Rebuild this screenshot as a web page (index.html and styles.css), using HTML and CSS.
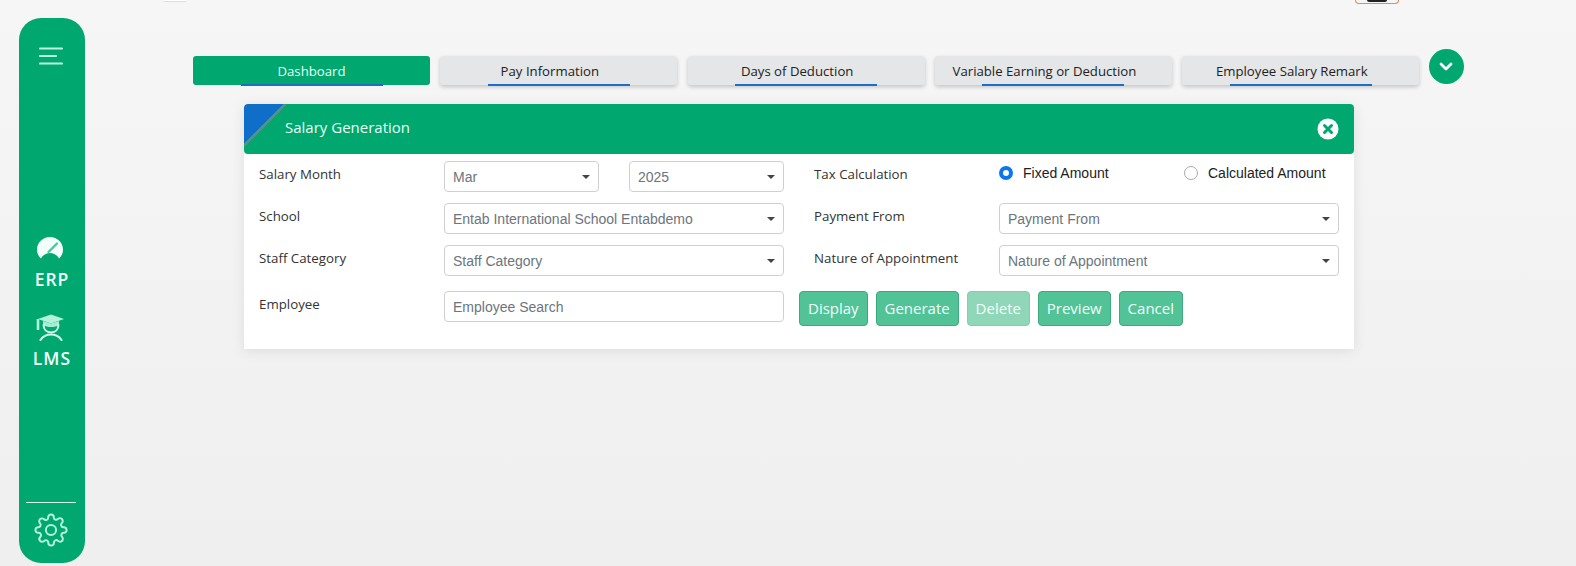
FILE: index.html
```html
<!DOCTYPE html>
<html lang="en">
  <head>
    <meta charset="UTF-8" />
    <meta name="viewport" content="width=device-width, initial-scale=1.0" />
    <title>Salary Generation</title>
    <link rel="stylesheet" href="styles.css">
  </head>
  <body>
    <aside class="sidebar">
      <svg class="menu-icon" width="24" height="19" viewBox="0 0 24 19">
        <path d="M1 1.500H23M1 9H17M1 16.500H23" fill="none" stroke="#bdf4e0" stroke-width="2.200" stroke-linecap="round" />
      </svg>

      <a class="side-link side-erp">
        <svg width="26" height="22" viewBox="0 0 26 22">
          <path d="M13 0C5.800 0 0 5.600 0 12.500c0 3 1 5.800 3 8l1 1c2-3.500 5.500-5.500 9-5.500s7 2 9 5.500l1-1c2-2.200 3-5 3-8C26 5.600 20.200 0 13 0z" fill="#f2fffa" />
          <path d="M11.500 15 20 6.500" stroke="#4cc79c" stroke-width="2.400" stroke-linecap="round" />
        </svg>
        <span>ERP</span>
      </a>

      <a class="side-link side-lms">
        <svg width="28" height="27" viewBox="0 0 28 27">
          <path d="M15 .5 28 5 15 9.500 2 5z" fill="#b5f2dc" />
          <path d="M7 7 15 9.500 23 7v4c-2 1.400-5 2-8 2s-6-.6-8-2z" fill="#a5eed4" />
          <path d="M2 5v11" stroke="#b5f2dc" stroke-width="2.600" />
          <path d="M7.500 10.500c0 5 3.200 8 7.500 8s7.500-3 7.500-8" fill="none" stroke="#d5f9ec" stroke-width="2" />
          <path d="M4.500 26c2.500-3.700 6-5.500 10.500-5.500S23 22.300 25.500 26" fill="none" stroke="#d5f9ec" stroke-width="2.200" stroke-linecap="round" />
        </svg>
        <span>LMS</span>
      </a>

      <div class="side-bottom">
        <svg width="34" height="34" viewBox="0 0 24 24" fill="none" stroke="#b5f2dc" stroke-width="1.400" stroke-linecap="round" stroke-linejoin="round">
          <circle cx="12" cy="12" r="3.600" />
          <path d="M19.400 15a1.650 1.650 0 0 0 .33 1.820l.06.06a2 2 0 1 1-2.830 2.830l-.06-.06a1.650 1.650 0 0 0-2.820 1.170V21a2 2 0 0 1-4 0v-.09A1.650 1.650 0 0 0 7.270 19.700l-.06.06a2 2 0 1 1-2.830-2.830l.06-.06A1.650 1.650 0 0 0 3.270 14H3a2 2 0 0 1 0-4h.09A1.650 1.650 0 0 0 4.300 7.270l-.06-.06a2 2 0 1 1 2.830-2.830l.06.06A1.650 1.650 0 0 0 10 3.270V3a2 2 0 0 1 4 0v.09a1.650 1.650 0 0 0 2.820 1.170l.06-.06a2 2 0 1 1 2.830 2.830l-.06.06A1.650 1.650 0 0 0 20.730 10H21a2 2 0 0 1 0 4h-.09a1.650 1.650 0 0 0-1.510 1z" />
        </svg>
      </div>
    </aside>

    <main class="content">
      <div class="topbar">
        <span class="top-check"></span>
        <span class="top-user"><span class="top-photo"></span></span>
      </div>

      <div class="tabs">
        <a class="tab tab-active">Dashboard</a>
        <a class="tab">Pay Information</a>
        <a class="tab">Days of Deduction</a>
        <a class="tab">Variable Earning or Deduction</a>
        <a class="tab">Employee Salary Remark</a>
        <button class="tab-more" type="button" aria-label="More">
          <svg width="14" height="9" viewBox="0 0 14 9">
            <path d="M2 2l5 5 5-5" fill="none" stroke="#fff" stroke-width="2.800" stroke-linecap="round" stroke-linejoin="round" />
          </svg>
        </button>
      </div>

      <section class="panel">
        <header class="panel-head">
          <h2>Salary Generation</h2>
          <svg width="22" height="22" viewBox="0 0 22 22">
            <circle cx="11" cy="11" r="10.500" fill="#fff" />
            <path d="M7.500 7.500l7 7M14.500 7.500l-7 7" stroke="#00a86f" stroke-width="3" stroke-linecap="round" />
          </svg>
        </header>

        <form class="form-grid">
          <label class="field-label">Salary Month</label>
          <div class="pair">
            <div class="select-box"><select><option>Mar</option></select></div>
            <div class="select-box"><select><option>2025</option></select></div>
          </div>
          <label class="field-label label-right">Tax Calculation</label>
          <div class="radios">
            <label class="radio-item"><input type="radio" name="tax" checked /> Fixed Amount</label>
            <label class="radio-item"><input type="radio" name="tax" /> Calculated Amount</label>
          </div>

          <label class="field-label">School</label>
          <div class="select-box"><select><option>Entab International School Entabdemo</option></select></div>
          <label class="field-label label-right">Payment From</label>
          <div class="select-box"><select><option>Payment From</option></select></div>

          <label class="field-label">Staff Category</label>
          <div class="select-box"><select><option>Staff Category</option></select></div>
          <label class="field-label label-right">Nature of Appointment</label>
          <div class="select-box"><select><option>Nature of Appointment</option></select></div>

          <label class="field-label label-employee">Employee</label>
          <input class="text-input" type="text" placeholder="Employee Search" />
          <div class="actions">
            <button class="btn" type="button">Display</button>
            <button class="btn" type="button">Generate</button>
            <button class="btn btn-off" type="button">Delete</button>
            <button class="btn" type="button">Preview</button>
            <button class="btn" type="button">Cancel</button>
          </div>
        </form>
      </section>
    </main>
  </body>
</html>
```

FILE: styles.css
```css
* {
  box-sizing: border-box;
}
html,
body {
  height: 100%;
  margin: 0;
  overflow: hidden;
}
body {
  display: flex;
  background: linear-gradient(#f6f6f6, #efefef);
  font-family: "Open Sans", sans-serif;
  color: #333;
}

/* sidebar */
.sidebar {
  width: 66px;
  height: 545px;
  margin: 18px 0 0 19px;
  padding: 29px 2px 0 0;
  flex: none;
  display: flex;
  flex-direction: column;
  align-items: center;
  background-color: #00a86f;
  border-radius: 22px;
}
.menu-icon {
  margin-left: -1px;
}
.side-link {
  display: flex;
  flex-direction: column;
  align-items: center;
  color: #f2fffa;
  font-size: 17.500px;
  font-weight: 600;
  letter-spacing: 1px;
  line-height: 23px;
}
.side-link span {
  margin: 9px 0 0 2px;
}
.side-link svg {
  margin-left: -2px;
}
.side-erp {
  margin-top: 171px;
}
.side-lms {
  margin-top: 23px;
}
.side-lms span {
  margin-top: 6px;
}
.side-bottom {
  margin-top: auto;
  width: 50px;
  height: 61px;
  padding-top: 10px;
  display: flex;
  justify-content: center;
  border-top: 1px solid #d5f9ec;
}

/* main */
.content {
  flex: 1;
  min-width: 0;
}
.topbar {
  height: 4px;
  padding-left: 78px;
  display: flex;
  justify-content: space-between;
  overflow: hidden;
}
.top-check {
  width: 24px;
  height: 2px;
  background-color: #fff;
  border-bottom: 1px solid #ddd;
  border-radius: 0 0 4px 4px;
}
.top-user {
  width: 44px;
  height: 4px;
  margin-right: 177px;
  display: flex;
  justify-content: center;
  border: 1px solid #e98a45;
  border-top: 0;
  border-radius: 0 0 6px 6px;
}
.top-photo {
  width: 20px;
  height: 2px;
  background-color: #222;
  border-radius: 0 0 10px 10px;
}

.tabs {
  margin: 45px 0 0 108px;
  display: flex;
  align-items: flex-end;
  gap: 10.330px;
}
.tab {
  position: relative;
  width: 237px;
  height: 29px;
  padding-right: 18px;
  display: flex;
  align-items: center;
  justify-content: center;
  background-color: #e5e6e8;
  border-radius: 3px;
  box-shadow: 0 2px 4px rgba(0, 0, 0, 0.2);
  font-size: 13.200px;
  color: #222;
}
.tab::after {
  content: "";
  position: absolute;
  left: 47.500px;
  bottom: -1px;
  width: 142px;
  height: 2px;
  background-color: #1a6fc9;
}
.tab-active {
  padding-right: 0;
  background-color: #00a86f;
  box-shadow: none;
  color: #e8fff5;
}
.tab-more {
  width: 35px;
  height: 35px;
  margin: 0 0 1px -1px;
  padding: 0;
  display: flex;
  align-items: center;
  justify-content: center;
  background-color: #00a86f;
  border: 0;
  border-radius: 50%;
}

/* panel */
.panel {
  width: 1110px;
  height: 245px;
  margin: 19px 0 0 159px;
  background-color: #fff;
  box-shadow: 0 2px 12px rgba(0, 0, 0, 0.09);
}
.panel-head {
  height: 50px;
  padding: 0 15px 0 41px;
  display: flex;
  align-items: center;
  justify-content: space-between;
  background-color: #00a86f;
  background-image: linear-gradient(135deg, #0f6fc8 0 47%, #4f9483 47% 52%, transparent 52%);
  background-size: 42px 42px;
  background-repeat: no-repeat;
  border-radius: 4px;
}
.panel-head h2 {
  margin: 0 0 5px;
  font-size: 15px;
  font-weight: 400;
  color: #e8fff5;
}

.form-grid {
  padding: 7px 15px 0;
  display: grid;
  grid-template-columns: 185px 340px 15px 15px 185px 340px;
  grid-template-rows: 31px 31px 31px 35px;
  row-gap: 11px;
}
.form-grid > :nth-child(n + 14) {
  margin-top: 4px;
}
.field-label {
  font-size: 13.300px;
  line-height: 24px;
  margin-top: 1px;
  color: #333;
}
.label-employee {
  margin-top: 5px;
}
.label-right {
  grid-column: 5;
}
.pair {
  display: flex;
  gap: 30px;
}
.pair .select-box {
  width: 155px;
}
.select-box {
  position: relative;
  height: 31px;
}
.select-box::after {
  content: "";
  position: absolute;
  right: 9px;
  top: 14px;
  border-top: 4px solid #444;
  border-left: 4px solid transparent;
  border-right: 4px solid transparent;
}
select,
.text-input {
  width: 100%;
  height: 31px;
  padding: 0 8px;
  background-color: #fff;
  border: 1px solid #ced0d4;
  border-radius: 4px;
  appearance: none;
  font-family: "Liberation Sans", Arial, sans-serif;
  font-size: 14px;
  color: #6c757d;
}
.text-input::placeholder {
  color: #6c757d;
  opacity: 1;
}
.radios {
  display: flex;
}
.radio-item {
  width: 185px;
  height: 24px;
  flex: none;
  display: flex;
  align-items: center;
  gap: 10px;
  font-family: "Liberation Sans", Arial, sans-serif;
  font-size: 14px;
  color: #222;
}
.radio-item input {
  width: 14px;
  height: 14px;
  margin: 0;
  appearance: none;
  background-color: #fff;
  border: 1px solid #aaa;
  border-radius: 50%;
}
.radio-item input:checked {
  border: 4px solid #0d75f0;
}
.actions {
  grid-column: 4 / -1;
  display: flex;
  gap: 7.900px;
}
.btn {
  height: 35px;
  padding: 0 8px 2px;
  background-color: #52c297;
  border: 1px solid #3fa97f;
  border-radius: 4px;
  font-family: "Open Sans", sans-serif;
  font-size: 15px;
  color: #f2fffa;
}
.btn-off {
  background-color: #90d6b9;
  border-color: #80cfae;
}
```
